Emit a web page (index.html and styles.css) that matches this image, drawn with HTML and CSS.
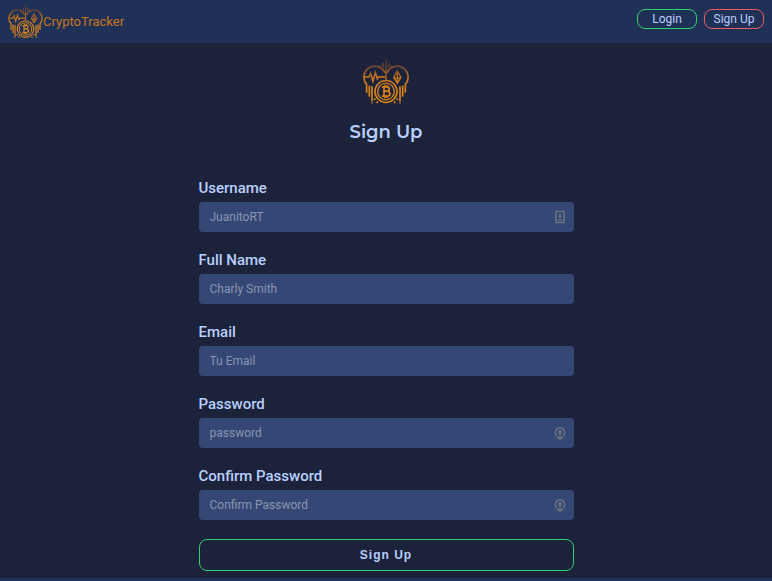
FILE: index.html
```html
<!DOCTYPE html>
<html lang="en">
<head>
<meta charset="utf-8">
<meta name="viewport" content="width=device-width, initial-scale=1">
<title>CryptoTracker</title>
<link rel="stylesheet" href="styles.css">
</head>
<body>
<svg class="defs" aria-hidden="true">
  <defs>
    <linearGradient id="gold" gradientUnits="userSpaceOnUse" x1="0" y1="24" x2="0" y2="110">
      <stop offset="0" stop-color="#4a3340"/>
      <stop offset=".3" stop-color="#79492f"/>
      <stop offset=".65" stop-color="#bd701f"/>
      <stop offset="1" stop-color="#d98318"/>
    </linearGradient>
    <symbol id="logo" viewBox="40 22 138 140">
      <g fill="none" stroke="url(#gold)" stroke-width="5">
        <path d="M52 102A33 33 0 1 1 106 66M112 66A33 33 0 1 1 166 102"/>
        <path d="M109 25L109.100 87M100 36V50M118 36V50M92 44V52M126 44V52" stroke-width="4"/>
        <path d="M43 78H58L63 68L70 91L77 65L83 84L87 78H107"/>
        <path d="M143 60L132 80L143 97L154 80ZM132 80L143 84L154 80M143 60V97" stroke-width="4"/>
        <circle cx="109" cy="122" r="33"/>
        <circle cx="109" cy="122" r="25" stroke-width="4"/>
        <path d="M97 108H111Q119 108 119 115Q119 121 111 121H103M111 121Q121 121 121 129Q121 136 111 136H97M103 108V136M106 102V107M113 102V107M106 137V142M113 137V142"/>
        <path d="M51 102V126M59 104V138M67 106V152M75 142V148M67 155V158M83 151V157M167 102V126M159 104V138M151 106V152M143 142V148M151 155V158M135 151V157"/>
      </g>
    </symbol>
  </defs>
</svg>
<header class="navbar">
  <a class="brand" href="#">
    <svg class="brand-logo" aria-hidden="true"><use href="#logo"/></svg>
    <span class="brand-name">CryptoTracker</span>
  </a>
  <nav class="actions">
    <button class="pill pill-login" type="button">Login</button>
    <button class="pill pill-signup" type="button">Sign Up</button>
  </nav>
</header>
<main class="page">
  <svg class="hero-logo" aria-hidden="true"><use href="#logo"/></svg>
  <h1 class="title">Sign Up</h1>
  <form class="form">
    <div class="field">
      <label for="username">Username</label>
      <div class="control">
        <input id="username" type="text" placeholder="JuanitoRT">
        <svg class="hint" viewBox="0 0 12 14" aria-hidden="true"><rect x="2" y="1.500" width="8" height="11"/><path d="M6 4V8M4.500 6.500H7.500M4 10H8"/></svg>
      </div>
    </div>
    <div class="field">
      <label for="fullname">Full Name</label>
      <div class="control"><input id="fullname" type="text" placeholder="Charly Smith"></div>
    </div>
    <div class="field">
      <label for="email">Email</label>
      <div class="control"><input id="email" type="email" placeholder="Tu Email"></div>
    </div>
    <div class="field">
      <label for="password">Password</label>
      <div class="control">
        <input id="password" type="password" placeholder="password">
        <svg class="hint" viewBox="0 0 12 14" aria-hidden="true"><path d="M3 10A4.700 4.700 0 1 1 9 10M4 11.500H8L6 13.500Z"/><circle cx="6" cy="6" r="1.300"/><path d="M6 7V9.500"/></svg>
      </div>
    </div>
    <div class="field">
      <label for="confirm">Confirm Password</label>
      <div class="control">
        <input id="confirm" type="password" placeholder="Confirm Password">
        <svg class="hint" viewBox="0 0 12 14" aria-hidden="true"><path d="M3 10A4.700 4.700 0 1 1 9 10M4 11.500H8L6 13.500Z"/><circle cx="6" cy="6" r="1.300"/><path d="M6 7V9.500"/></svg>
      </div>
    </div>
    <button class="submit" type="submit">Sign Up</button>
  </form>
</main>
<footer class="footer"></footer>
</body>
</html>
```
FILE: styles.css
```css
* { box-sizing: border-box; }

body {
  margin: 0;
  min-height: 100vh;
  display: flex;
  flex-direction: column;
  background: #1b2239;
  color: #b8d0ff;
  font-family: Roboto, sans-serif;
}

.defs { position: absolute; width: 0; height: 0; }

.navbar {
  display: flex;
  align-items: center;
  justify-content: space-between;
  padding: 4px 8px;
  background: #203158;
}

.brand {
  display: flex;
  align-items: center;
  text-decoration: none;
}

.brand-logo { width: 35px; height: 35px; }

.brand-name {
  font-size: 13px;
  line-height: 16px;
  color: #c5761e;
}

.actions {
  display: flex;
  gap: 7px;
  margin-bottom: 5px;
}

.pill {
  width: 60px;
  height: 20px;
  padding: 0;
  border: 1px solid;
  border-radius: 8px;
  background: transparent;
  color: #b8d0ff;
  font: 400 12px/16px Roboto, sans-serif;
}

.pill-login { border-color: #36cf72; }
.pill-signup { border-color: #f05b62; }

.page {
  flex: 1;
  display: flex;
  flex-direction: column;
  align-items: center;
  padding: 15px 16px 7px;
}

.hero-logo { width: 46px; height: 47px; }

.title {
  margin: 15px 0 34px;
  font: 600 18px/24px Montserrat, Inter, sans-serif;
}

.form {
  width: 100%;
  max-width: 375px;
}

.field { margin-bottom: 18px; }

.field label {
  display: block;
  padding-bottom: 4px;
  font-size: 15px;
  font-weight: 500;
  line-height: 20px;
}

.control { position: relative; }

.control input {
  display: block;
  width: 100%;
  height: 30px;
  padding: 0 30px 0 11px;
  border: 0;
  border-radius: 4px;
  background: #354875;
  color: #b8d0ff;
  font: 400 12px/16px Roboto, sans-serif;
}

.control input::placeholder { color: #8995b0; opacity: 1; }

.hint {
  position: absolute;
  top: 8px;
  right: 8px;
  width: 12px;
  height: 14px;
  fill: none;
  stroke: #6b7280;
  stroke-width: 1.5;
}

.submit {
  display: block;
  width: 100%;
  height: 32px;
  margin-top: 19px;
  border: 1px solid #36cf72;
  border-radius: 8px;
  background: transparent;
  color: #b8d0ff;
  font: 700 12px/16px "Liberation Sans", Arial, sans-serif;
  letter-spacing: 1px;
}

.footer {
  height: 3px;
  background: #203158;
}
```
